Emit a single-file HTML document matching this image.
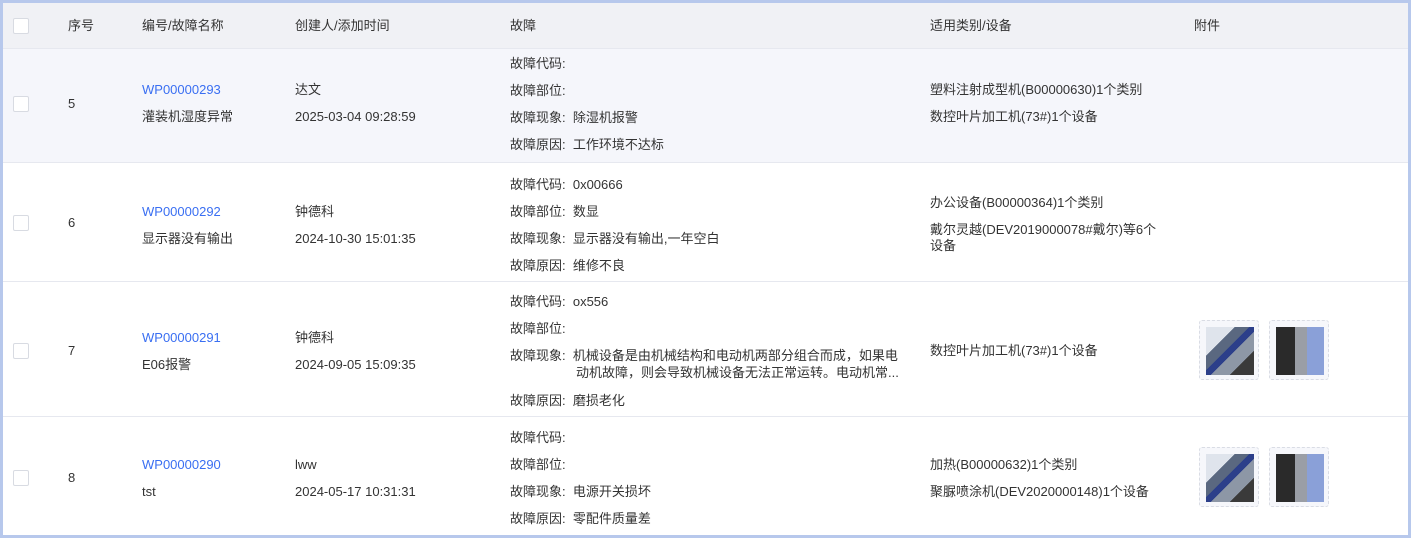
<!DOCTYPE html>
<html><head><meta charset="utf-8"><style>
*{margin:0;padding:0;box-sizing:border-box}
body{width:1411px;height:538px;background:#b7c8ec;font-family:"Liberation Sans","Noto Sans CJK SC",sans-serif;font-size:13px;color:#333;position:relative;overflow:hidden}
.wrap{position:absolute;left:3px;top:3px;width:1405px;height:532px;background:#fff;overflow:hidden}
.row{position:absolute;left:0;width:1405px;border-bottom:1px solid #e6e8ef}
.t{position:absolute;white-space:nowrap;line-height:16px}
.cb{position:absolute;left:10px;width:16px;height:16px;border:1px solid #d8dbe2;border-radius:2px;background:#fff}
.a{color:#3a6ff2}
.th{position:absolute;width:60px;height:60px;border:1px dashed #d9dce4;border-radius:3px;background:#f6f7fb}
.th div{position:absolute;left:6px;top:6px;width:48px;height:48px}
.p1{background:linear-gradient(135deg,#dfe4ec 0 30%,#5a6880 30% 45%,#2c3f8a 45% 55%,#8d97a6 55% 75%,#3a3a3a 75%)}
.p2{background:linear-gradient(90deg,#2a2a2a 0 40%,#9a9ea6 40% 65%,#8aa0d8 65%)}
</style></head><body><div class="wrap">
<div class="row" style="top:0;height:46px;background:#f0f1f5">
<div class="cb" style="top:15px"></div>
<div class="t" style="left:65px;top:15px">序号</div>
<div class="t" style="left:139px;top:15px">编号/故障名称</div>
<div class="t" style="left:292px;top:15px">创建人/添加时间</div>
<div class="t" style="left:507px;top:15px">故障</div>
<div class="t" style="left:927px;top:15px">适用类别/设备</div>
<div class="t" style="left:1191px;top:15px">附件</div>
</div>
<div class="row" style="top:46px;height:114px;background:#f5f6fb">
<div class="cb" style="top:47px"></div>
<div class="t" style="left:65px;top:47px">5</div>
<div class="t a" style="left:139px;top:33px">WP00000293</div>
<div class="t" style="left:139px;top:60px">灌装机湿度异常</div>
<div class="t" style="left:292px;top:33px">达文</div>
<div class="t" style="left:292px;top:60px">2025-03-04 09:28:59</div>
<div class="t" style="left:507px;top:7px">故障代码:</div>
<div class="t" style="left:507px;top:34px">故障部位:</div>
<div class="t" style="left:507px;top:61px">故障现象:&nbsp; 除湿机报警</div>
<div class="t" style="left:507px;top:88px">故障原因:&nbsp; 工作环境不达标</div>
<div class="t" style="left:927px;top:33px">塑料注射成型机(B00000630)1个类别</div>
<div class="t" style="left:927px;top:60px">数控叶片加工机(73#)1个设备</div>
</div>
<div class="row" style="top:160px;height:119px">
<div class="cb" style="top:52px"></div>
<div class="t" style="left:65px;top:52px">6</div>
<div class="t a" style="left:139px;top:41px">WP00000292</div>
<div class="t" style="left:139px;top:68px">显示器没有输出</div>
<div class="t" style="left:292px;top:41px">钟德科</div>
<div class="t" style="left:292px;top:68px">2024-10-30 15:01:35</div>
<div class="t" style="left:507px;top:14px">故障代码:&nbsp; 0x00666</div>
<div class="t" style="left:507px;top:41px">故障部位:&nbsp; 数显</div>
<div class="t" style="left:507px;top:68px">故障现象:&nbsp; 显示器没有输出,一年空白</div>
<div class="t" style="left:507px;top:95px">故障原因:&nbsp; 维修不良</div>
<div class="t" style="left:927px;top:32px">办公设备(B00000364)1个类别</div>
<div class="t" style="left:927px;top:59px">戴尔灵越(DEV2019000078#戴尔)等6个</div>
<div class="t" style="left:927px;top:75px">设备</div>
</div>
<div class="row" style="top:279px;height:135px">
<div class="cb" style="top:61px"></div>
<div class="t" style="left:65px;top:61px">7</div>
<div class="t a" style="left:139px;top:48px">WP00000291</div>
<div class="t" style="left:139px;top:75px">E06报警</div>
<div class="t" style="left:292px;top:48px">钟德科</div>
<div class="t" style="left:292px;top:75px">2024-09-05 15:09:35</div>
<div class="t" style="left:507px;top:12px">故障代码:&nbsp; ox556</div>
<div class="t" style="left:507px;top:39px">故障部位:</div>
<div class="t" style="left:507px;top:66px">故障现象:&nbsp; 机械设备是由机械结构和电动机两部分组合而成，如果电</div>
<div class="t" style="left:573px;top:83px">动机故障，则会导致机械设备无法正常运转。电动机常...</div>
<div class="t" style="left:507px;top:111px">故障原因:&nbsp; 磨损老化</div>
<div class="t" style="left:927px;top:61px">数控叶片加工机(73#)1个设备</div>
<div class="th" style="left:1196px;top:38px"><div class="p1"></div></div>
<div class="th" style="left:1266px;top:38px"><div class="p2"></div></div>
</div>
<div class="row" style="top:414px;height:118px;border-bottom:none">
<div class="cb" style="top:53px"></div>
<div class="t" style="left:65px;top:53px">8</div>
<div class="t a" style="left:139px;top:40px">WP00000290</div>
<div class="t" style="left:139px;top:67px">tst</div>
<div class="t" style="left:292px;top:40px">lww</div>
<div class="t" style="left:292px;top:67px">2024-05-17 10:31:31</div>
<div class="t" style="left:507px;top:13px">故障代码:</div>
<div class="t" style="left:507px;top:40px">故障部位:</div>
<div class="t" style="left:507px;top:67px">故障现象:&nbsp; 电源开关损坏</div>
<div class="t" style="left:507px;top:94px">故障原因:&nbsp; 零配件质量差</div>
<div class="t" style="left:927px;top:40px">加热(B00000632)1个类别</div>
<div class="t" style="left:927px;top:67px">聚脲喷涂机(DEV2020000148)1个设备</div>
<div class="th" style="left:1196px;top:30px"><div class="p1"></div></div>
<div class="th" style="left:1266px;top:30px"><div class="p2"></div></div>
</div>
</div></body></html>
